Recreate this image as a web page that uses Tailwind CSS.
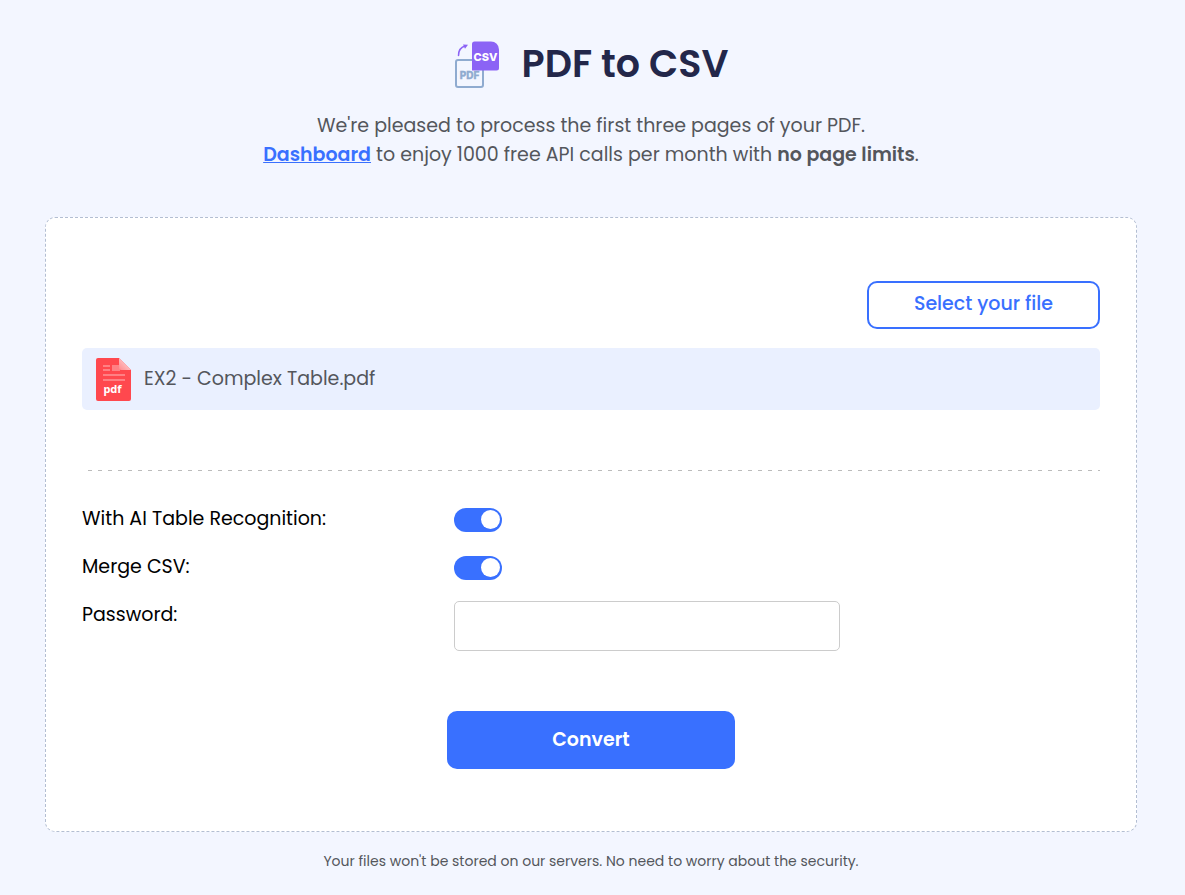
<!DOCTYPE html>
<html lang="en">
<head>
    <meta charset="UTF-8">
    <meta name="viewport" content="width=device-width, initial-scale=1.0">
    <title>PDF to CSV</title>
    <script src="https://cdn.jsdelivr.net/npm/@tailwindcss/browser@4"></script>
</head>
<body class="min-h-screen bg-[#f3f6ff] pt-9 pb-6 pl-[45px] pr-12 font-['Poppins','Inter',sans-serif] text-[19px] text-[#54565c]">

    <!-- Title -->
    <header class="text-center">
        <div class="flex items-center justify-center gap-5">
            <svg class="h-14 w-12" viewBox="0 0 48 56" fill="none" aria-hidden="true">
                <rect x="2" y="24" width="27" height="27" rx="2" stroke="#8fabd0" stroke-width="2" />
                <path d="M18 8a2.500 2.500 0 0 1 2.500-2.500H37a8 8 0 0 1 8 8V32a2.500 2.500 0 0 1-2.500 2.500H18z" fill="#8b63f5" />
                <text x="15.500" y="43" text-anchor="middle" font-family="Inter, sans-serif" font-size="10" font-weight="800" fill="#8fabd0" stroke="#8fabd0" stroke-width="0.300">PDF</text>
                <text x="31.500" y="24.500" text-anchor="middle" font-family="Inter, sans-serif" font-size="11" font-weight="800" fill="#fff">CSV</text>
                <path d="M4.500 19.500c0-5 2.500-8.500 7-9.500" stroke="#8b63f5" stroke-width="1.500" stroke-linecap="round" />
                <path d="M9 8.500l5 .3-3 4z" fill="#8b63f5" />
            </svg>
            <h1 class="text-[38px] leading-14 font-semibold text-[#23274a]">PDF to CSV</h1>
        </div>
        <p class="mt-[19px] leading-[29px]">
            We're pleased to process the first three pages of your PDF.<br>
            <a href="#" class="font-semibold text-[#3970ff] underline">Dashboard</a> to enjoy 1000 free API calls per month with <b class="font-semibold">no page limits</b>.
        </p>
    </header>

    <!-- Converter -->
    <form class="mt-12 rounded-[10px] border border-dashed border-[#b3bed2] bg-white px-9 pt-[63px] pb-[62px]">
        <div class="flex justify-end">
            <button type="button" class="h-12 w-[233px] rounded-[10px] border-2 border-[#3970ff] pb-0.5 font-medium text-[#3970ff]">Select your file</button>
        </div>

        <div class="mt-[19px] flex h-[62px] items-center gap-[13px] rounded-[5px] bg-[#eaf0ff] px-3.5">
            <svg class="h-[43px] w-[35px]" viewBox="0 0 35 43" fill="none" aria-hidden="true">
                <defs>
                    <linearGradient id="fold" x1="1" y1="0" x2="0" y2="1">
                        <stop offset="0.400" stop-color="#ffc0c2" />
                        <stop offset="1" stop-color="#ff8a8d" />
                    </linearGradient>
                </defs>
                <path d="M2 0h21l12 12v29a2 2 0 0 1-2 2H2a2 2 0 0 1-2-2V2a2 2 0 0 1 2-2z" fill="#ff484e" />
                <path d="M7 7h7v2H7zM7 11h7v2H7zM7 16h22v2H7zM7 21h22v2H7zM16 7h8v6h-8z" fill="#ff8084" />
                <path d="M23 0l12 12H25a2 2 0 0 1-2-2z" fill="url(#fold)" />
                <text x="16.500" y="35" text-anchor="middle" font-family="Noto Sans, sans-serif" font-size="11" font-weight="700" fill="#fff">pdf</text>
            </svg>
            <span>EX2 - Complex Table.pdf</span>
        </div>

        <div class="mt-[60px] ml-1.5 h-px bg-[repeating-linear-gradient(90deg,#bbbbbb_0_4px,transparent_4px_10px)]"></div>

        <div class="mt-[30px] grid grid-cols-[372px_1fr] text-black">
            <label for="ai" class="h-12 leading-9">With AI Table Recognition:</label>
            <div class="flex h-12 pt-[7px]">
                <input id="ai" type="checkbox" checked class="h-6 w-12 appearance-none rounded-full bg-gray-300 before:mt-0.5 before:ml-0.5 before:block before:size-[19px] before:rounded-full before:bg-white checked:bg-[#3970ff] checked:before:ml-[27px]">
            </div>
            <label for="merge" class="h-12 leading-9">Merge CSV:</label>
            <div class="flex h-12 pt-[7px]">
                <input id="merge" type="checkbox" checked class="h-6 w-12 appearance-none rounded-full bg-gray-300 before:mt-0.5 before:ml-0.5 before:block before:size-[19px] before:rounded-full before:bg-white checked:bg-[#3970ff] checked:before:ml-[27px]">
            </div>
            <label for="password" class="leading-9">Password:</label>
            <div class="pt-1">
                <input id="password" type="password" class="block h-[50px] w-full max-w-[386px] rounded-[5px] border border-[#cccccc] px-3">
            </div>
        </div>

        <div class="mt-[60px] flex justify-center">
            <button type="submit" class="h-[58px] w-72 rounded-[10px] bg-[#3970ff] font-semibold text-white">Convert</button>
        </div>
    </form>

    <p class="mt-[18px] text-center text-sm leading-[22px]">Your files won't be stored on our servers. No need to worry about the security.</p>

</body>
</html>
